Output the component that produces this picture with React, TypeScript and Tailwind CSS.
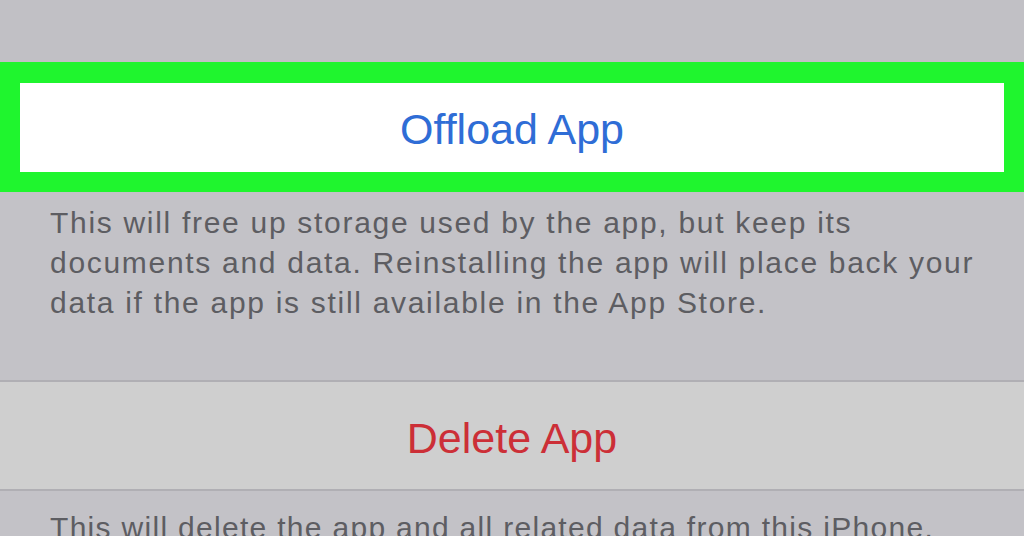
const App: React.FC = () => {
  return (
    <main className="h-[536px] w-[1024px] overflow-hidden bg-[#c3c2c7] font-['Liberation_Sans',Arial,sans-serif]">
      <div className="h-[62px] bg-[#c1c0c5]" />
      <div className="bg-[#1ff52e] px-5 pb-[20px] pt-[21px]">
        <button className="flex h-[89px] w-full items-center justify-center bg-white pt-[4px] text-[43px] text-[#2f6dd6]">
          Offload App
        </button>
      </div>
      <p className="h-[188px] whitespace-nowrap px-[50px] pt-[11px] text-[30px] leading-[40px] tracking-[1.7px] text-[#5d5d62]">
        This will free up storage used by the app, but keep its
        <br />
        documents and data. Reinstalling the app will place back your
        <br />
        data if the app is still available in the App Store.
      </p>
      <div className="border-y-2 border-[#b0afb4] bg-[#cfcfcf]">
        <button className="flex h-[107px] w-full items-center justify-center pt-[6px] text-[43px] text-[#cc2f37]">
          Delete App
        </button>
      </div>
      <p className="whitespace-nowrap px-[50px] pt-[17px] text-[30px] leading-[40px] tracking-[1.3px] text-[#5d5d62]">
        This will delete the app and all related data from this iPhone.
      </p>
    </main>
  );
};

export default App;
